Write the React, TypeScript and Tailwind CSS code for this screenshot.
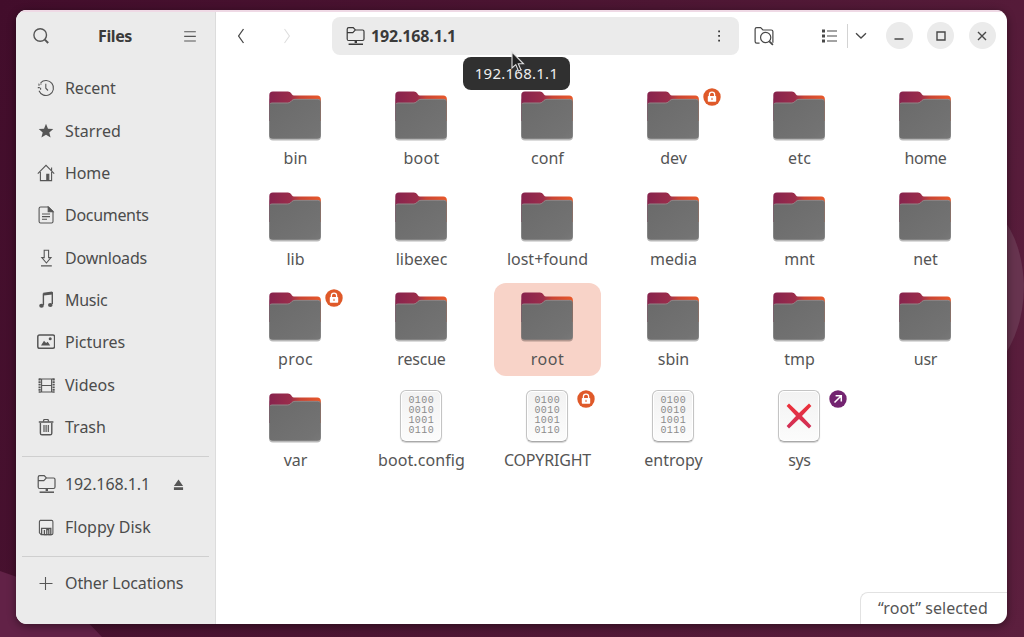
import type { ReactNode } from "react";

function Icon({ children, className = "size-[18px]" }: { children: ReactNode; className?: string }) {
  return (
    <svg viewBox="0 0 18 18" className={className + " shrink-0"} fill="none" stroke="currentColor" strokeWidth="1.1">
      {children}
    </svg>
  );
}

const NetworkFolder = () => (
  <svg viewBox="0 0 20 20" className="size-5 shrink-0" fill="none" stroke="currentColor" strokeWidth="1.2">
    <path d="M1.2 3.2Q1.2 1.6 2.8 1.6H7.2L9.4 4H16.6Q18 4 18 5.4V13Q18 14.5 16.5 14.5H2.7Q1.2 14.5 1.2 13ZM1.2 6.6H6.8L9.2 4.2" />
    <path d="M2.6 18.2H17" strokeWidth="1.5" />
    <path d="M8.6 16H11" strokeWidth="2" />
  </svg>
);

type Place = { name: string; track: string; icon: ReactNode };

const places: Place[] = [
  {
    name: "Recent",
    track: "tracking-[-0.1px]",
    icon: (
      <Icon>
        <path d="M3.6 3.8A7.5 7.5 0 1 1 2 11.8M8.8 4.8V9.2L11 11.5" />
        <path d="M0.8 8.6H3.6V11M2 6.8V5H4.6" strokeDasharray="2 1" />
      </Icon>
    ),
  },
  {
    name: "Starred",
    track: "tracking-[0.1px]",
    icon: (
      <Icon>
        <path d="M9 1.8L11 6.7L16.3 7L12.3 10.4L13.6 15.5L9 12.7L4.4 15.5L5.7 10.4L1.7 7L7 6.7Z" fill="currentColor" stroke="none" />
      </Icon>
    ),
  },
  {
    name: "Home",
    track: "tracking-[-0.1px]",
    icon: (
      <Icon>
        <path d="M0.8 9.6L9 1.4L17.2 9.6M3.4 8V16.6H14.6V8M14.6 3.5V6.5" />
        <path d="M9.8 16.5V10.4H11.8V16.5" fill="currentColor" />
      </Icon>
    ),
  },
  {
    name: "Documents",
    track: "tracking-[-0.3px]",
    icon: (
      <Icon>
        <path d="M3.6 1H11.4L16 5.6V15.5Q16 17 14.5 17H3.6Q2.1 17 2.1 15.5V2.5Q2.1 1 3.6 1ZM5 8H13M5 10.6H13M5 13.2H10" />
        <path d="M11.2 1V5.8H16Z" fill="currentColor" />
      </Icon>
    ),
  },
  {
    name: "Downloads",
    track: "tracking-[-0.2px]",
    icon: (
      <Icon>
        <path d="M7.2 1.2V8.6H4.8L9.4 14L14 8.6H11.6V1.2ZM4 16.9H14.8" />
      </Icon>
    ),
  },
  {
    name: "Music",
    track: "tracking-[-0.3px]",
    icon: (
      <Icon>
        <path d="M6.4 14V3L15.3 1.9V13" strokeWidth="1.4" />
        <path d="M6.4 3.2L15.3 2" strokeWidth="2.8" />
        <ellipse cx="4.5" cy="14.7" rx="2.3" ry="2" fill="currentColor" stroke="none" />
        <ellipse cx="13.3" cy="13.9" rx="2.3" ry="2" fill="currentColor" stroke="none" />
      </Icon>
    ),
  },
  {
    name: "Pictures",
    track: "tracking-[0px]",
    icon: (
      <Icon>
        <rect x="0.8" y="2" width="16.8" height="13.2" rx="1.8" strokeWidth="1.5" />
        <path d="M4 12.5L7 7.8L9.1 10L10.7 8.7L13.2 12.5Z" fill="currentColor" stroke="none" />
        <circle cx="13.2" cy="5.8" r="1.5" fill="currentColor" stroke="none" />
      </Icon>
    ),
  },
  {
    name: "Videos",
    track: "tracking-[0px]",
    icon: (
      <Icon>
        <path d="M2.6 2.6V16.4M16.6 2.6V16.4" strokeWidth="2.2" strokeDasharray="1.8 0.8" />
        <path d="M4.6 2.6V16.4M14.6 2.6V16.4M2 3H17.4M2 16H17.4M4.6 9.5H14.6" />
      </Icon>
    ),
  },
  {
    name: "Trash",
    track: "tracking-[0px]",
    icon: (
      <Icon>
        <path d="M3.4 5V15.2Q3.4 16.8 5 16.8H13.2Q14.8 16.8 14.8 15.2V5M1.8 4H16.4" strokeWidth="1.4" />
        <path d="M6.3 3.5L7 1.5H11L11.7 3.5M7 7V14M9.1 7V14M11.3 7V14" strokeWidth="1.2" />
      </Icon>
    ),
  },
];

type FileKind = "folder" | "binary" | "broken";
type Entry = { name: string; track?: string; kind?: FileKind; badge?: "lock" | "link"; selected?: boolean };

const entries: Entry[] = [
  { name: "bin" },
  { name: "boot", track: "tracking-[0.3px]" },
  { name: "conf" },
  { name: "dev" , badge: "lock" },
  { name: "etc", track: "tracking-[0.2px]" },
  { name: "home", track: "tracking-[-0.4px]" },
  { name: "lib" },
  { name: "libexec" },
  { name: "lost+found" },
  { name: "media" },
  { name: "mnt" },
  { name: "net" },
  { name: "proc", badge: "lock", track: "tracking-[0.4px]" },
  { name: "rescue", track: "tracking-[-0.2px]" },
  { name: "root", selected: true, track: "tracking-[0.5px]" },
  { name: "sbin" },
  { name: "tmp" },
  { name: "usr", track: "tracking-[-0.3px]" },
  { name: "var" },
  { name: "boot.config", kind: "binary", track: "tracking-[0.1px]" },
  { name: "COPYRIGHT", kind: "binary", badge: "lock", track: "tracking-[-0.2px]" },
  { name: "entropy", kind: "binary" },
  { name: "sys", kind: "broken", badge: "link", track: "tracking-[-0.4px]" },
];

function Folder() {
  return (
    <svg viewBox="0 0 54 52" className="mt-[9px] h-[52px] w-[54px]">
      <defs>
        <linearGradient id="back" x1="0" x2="1" y1="0" y2="0">
          <stop offset="0" stopColor="#87234d" />
          <stop offset="0.42" stopColor="#9b2d4b" />
          <stop offset="0.6" stopColor="#c94434" />
          <stop offset="1" stopColor="#e9592a" />
        </linearGradient>
        <linearGradient id="front" x1="0" x2="1" y1="0" y2="1">
          <stop offset="0" stopColor="#6a6a6a" />
          <stop offset="0.85" stopColor="#737373" />
          <stop offset="1" stopColor="#787878" />
        </linearGradient>
      </defs>
      <rect x="1" y="6" width="52" height="43.4" rx="4" fill="#000" opacity="0.28" />
      <path d="M1.3 4.2Q1.3 0.6 4.9 0.6H20Q22 0.6 23 2.1L24 3.6Q24.7 4.5 26 4.5H49.3Q52.8 4.5 52.8 8V30H1.3Z" fill="url(#back)" />
      <path d="M1.3 14.4Q1.3 11.8 4 11.8H19.5Q21.3 11.8 22.6 10.6L24 9.2Q25.3 8.1 27 8.1H49.6Q52.8 8.1 52.8 11.3V44.2Q52.8 47.8 49.2 47.8H4.9Q1.3 47.8 1.3 44.2Z" fill="url(#front)" />
      <path d="M2 12.8Q2.5 12 4 12H19.5Q21.3 12 22.6 10.8L24 9.4Q25.3 8.3 27 8.3H49.6Q51.5 8.3 52.3 9.6" fill="none" stroke="#a08f92" strokeWidth="0.7" />
    </svg>
  );
}

function Sheet({ children }: { children: ReactNode }) {
  return (
    <div className="mt-[6px] flex h-[52px] w-[42px] flex-col items-center justify-center rounded-[6px] border border-[#c4c4c4] border-b-[#a9a9a9] bg-gradient-to-b from-[#f2f2f2] to-[#fcfcfc] shadow-[0_1px_1px_rgba(0,0,0,0.18),inset_0_0_0_1px_#fff]">
      {children}
    </div>
  );
}

function Badge({ type }: { type: "lock" | "link" }) {
  return (
    <svg viewBox="0 0 18 18" className="absolute top-[6px] right-[6px] size-[18px]">
      <circle cx="9" cy="9" r="8.7" fill={type === "lock" ? "#df5929" : "#732470"} />
      {type === "lock" ? (
        <>
          <path d="M6.4 9V6.5Q6.4 4.2 9 4.2Q11.6 4.2 11.6 6.5V9" fill="none" stroke="#fff" strokeWidth="1.3" />
          <rect x="4.8" y="8" width="8.4" height="5.8" rx="0.7" fill="#fff" />
          <path d="M9 9.8V12" stroke="#df5929" strokeWidth="1" />
        </>
      ) : (
        <path d="M5.5 12.5L11.8 6.2M6.6 5.8H12.3V11.5" fill="none" stroke="#fff" strokeWidth="1.5" />
      )}
    </svg>
  );
}

function Tile({ entry }: { entry: Entry }) {
  return (
    <div
      className={
        "relative flex h-[93px] w-[107px] flex-col items-center rounded-[12px] " + (entry.selected ? "bg-[#f8d3c8]" : "")
      }
    >
      <div className="flex h-[65px] items-start pr-px">
        {entry.kind === "binary" ? (
          <Sheet>
            {["0100", "0010", "1001", "0110"].map((line) => (
              <span key={line} className="pl-[0.5px] font-['Liberation_Mono'] text-[10px] leading-[10px] tracking-[0.4px] text-[#8b8b8b]">
                {line}
              </span>
            ))}
          </Sheet>
        ) : entry.kind === "broken" ? (
          <Sheet>
            <svg viewBox="0 0 26 26" className="size-[26px]">
              <defs>
                <linearGradient id="cross" x1="0" x2="0" y1="0" y2="1">
                  <stop offset="0" stopColor="#ee3038" />
                  <stop offset="1" stopColor="#cf3059" />
                </linearGradient>
              </defs>
              <path d="M3 0.6L13 10L23 0.6L25.4 3L16 13L25.4 23L23 25.4L13 16L3 25.4L0.6 23L10 13L0.6 3Z" fill="url(#cross)" />
            </svg>
          </Sheet>
        ) : (
          <Folder />
        )}
      </div>
      <span className={"text-[16px] leading-[22px] whitespace-nowrap text-[#555] " + (entry.track ?? "")}>{entry.name}</span>
      {entry.badge && <Badge type={entry.badge} />}
    </div>
  );
}

function Row({ children, label, track = "" }: { children: ReactNode; label: string; track?: string }) {
  return (
    <div className="flex h-[42.35px] items-center pl-[21px]">
      <span className="flex w-[18px] shrink-0">{children}</span>
      <span className={"ml-[10px] text-[16px] leading-5 whitespace-nowrap text-[#4c4c4c] " + track}>{label}</span>
    </div>
  );
}

function Sidebar() {
  return (
    <aside className="flex w-[200px] shrink-0 flex-col border-r border-[#dcdcdc] bg-[#ebebeb] text-[#565656]">
      <header className="flex h-[51px] items-center justify-between pr-[18px] pl-4">
        <Icon>
          <circle cx="8.2" cy="8" r="6.3" strokeWidth="1.4" />
          <path d="M12.8 12.6L16.2 16" strokeWidth="2" />
        </Icon>
        <h1 className="pr-[3px] text-[16px] font-bold tracking-[-0.4px] text-[#3a3a3a]">Files</h1>
        <Icon className="size-[14px]">
          <path d="M1.5 3.5H16.5M1.5 9.5H16.5M1.5 15.5H16.5" strokeWidth="1.4" />
        </Icon>
      </header>
      <nav className="pt-[6px]">
        {places.map((place) => (
          <Row key={place.name} label={place.name} track={place.track}>
            {place.icon}
          </Row>
        ))}
      </nav>
      <hr className="mx-[6px] mt-[8px] mb-[6px] border-[#cfcfcf]" />
      <div className="flex items-center">
        <Row label="192.168.1.1" track="tracking-[-0.1px]">
          <NetworkFolder />
        </Row>
        <svg viewBox="0 0 12 12" className="ml-[23px] size-[11px]" fill="currentColor">
          <path d="M6 0.5L11 7.5H1ZM1 9H11V12H1Z" />
        </svg>
      </div>
      <Row label="Floppy Disk">
        <Icon>
          <path d="M3 2.4H14.6Q15.9 2.4 15.9 3.7V15.3Q15.9 16.6 14.6 16.6H4.2L2.4 14.8V3.7Q2.4 2.4 3.7 2.4" />
          <path d="M4.6 16.6V10.4H13.8V16.6H11.8V11.6H9.8V16.6H7.4V12" strokeWidth="1.3" />
        </Icon>
      </Row>
      <hr className="mx-[6px] mt-[8px] mb-[5px] border-[#cfcfcf]" />
      <Row label="Other Locations" track="tracking-[-0.1px]">
        <Icon>
          <path d="M2.5 9.5H15.5M8.5 3V16" />
        </Icon>
      </Row>
    </aside>
  );
}

function Toolbar() {
  return (
    <header className="flex h-[51px] shrink-0 items-center text-[#484848]">
      <Icon className="ml-[16px] size-[18px]">
        <path d="M11.5 2L6.6 9L11.5 16" strokeWidth="1.3" />
      </Icon>
      <Icon className="ml-[28px] size-[18px] text-[#dedede]">
        <path d="M6.5 2L11.4 9L6.5 16" />
      </Icon>
      <div className="mt-px ml-[36px] flex h-[38px] w-[407px] items-center rounded-[8px] bg-[#ebebeb] pr-[18px] pl-[14px] text-[#3a3a3a]">
        <NetworkFolder />
        <span className="ml-[5px] flex-1 text-[16px] leading-5 font-bold tracking-[-0.15px]">192.168.1.1</span>
        <svg viewBox="0 0 4 14" className="h-[14px] w-1" fill="currentColor">
          <path d="M1.2 1.4H3V3.2H1.2ZM1.2 6H3V7.8H1.2ZM1.2 10.8H3V12.6H1.2Z" />
        </svg>
      </div>
      <Icon className="ml-[15px] size-5">
        <path d="M5 15.5H2.5Q1 15.5 1 14V3Q1 1.5 2.5 1.5H6L8 3.6H15.5Q17 3.6 17 5V15" />
        <circle cx="10.5" cy="10.4" r="4.6" />
        <path d="M13.8 13.8L17 17" strokeWidth="1.6" />
      </Icon>
      <svg viewBox="0 0 16 14" className="ml-[47px] h-[14px] w-4" fill="none" stroke="currentColor">
        <path d="M1 2H4M1 7H4M1 12H4" strokeWidth="3" />
        <path d="M6 2H16M6 7H16M6 12H16" strokeWidth="1.2" />
      </svg>
      <span className="ml-[9.5px] h-6 w-px bg-[#d3d3d3]" />
      <svg viewBox="0 0 12 8" className="ml-[7px] h-2 w-3" fill="none" stroke="currentColor" strokeWidth="1.3">
        <path d="M1 1.2L6 6L11 1.2" />
      </svg>
      <div className="ml-[19px] flex gap-[14.5px]">
        {["M4.5 12H13.5", "M5 5H13V13H5Z", "M5 5L13 13M13 5L5 13"].map((d) => (
          <button key={d} className="grid size-[27px] place-items-center rounded-full bg-[#ebebeb]">
            <Icon>
              <path d={d} strokeWidth="1.4" />
            </Icon>
          </button>
        ))}
      </div>
    </header>
  );
}

export default function App() {
  return (
    <div className="relative h-[637px] w-[1024px] overflow-hidden bg-[linear-gradient(115deg,#420d2b_0%,#4d1633_50%,#5c1f3e_100%)] pt-[10px] pl-4 font-['Noto_Sans',sans-serif]">
      <svg className="absolute inset-0 size-full" viewBox="0 0 1024 637">
        <path d="M1000 215Q1022 240 1024 285Q1024 330 1000 362Z" fill="#67344f" />
        <path d="M0 571Q60 590 102 637H0Z" fill="#622247" />
      </svg>
      <div className="relative flex h-[614px] w-[991px] overflow-hidden rounded-[11px] bg-white shadow-[0_2px_8px_rgba(0,0,0,0.45)]">
        <Sidebar />
        <main className="flex flex-1 flex-col">
          <Toolbar />
          <div className="mt-[21px] ml-[26px] grid grid-cols-[repeat(6,107px)] gap-x-[19px] gap-y-[7.5px]">
            {entries.map((entry) => (
              <Tile key={entry.name} entry={entry} />
            ))}
          </div>
          <div className="mt-auto ml-auto flex h-[32px] w-[147px] items-center rounded-tl-[8px] border-t border-l border-[#e2e2e2] pb-px pl-[17px] text-[16px] tracking-[0.05px] whitespace-nowrap text-[#555]">
            “root” selected
          </div>
        </main>
        <span className="absolute inset-x-0 top-0 h-[1.5px] bg-[#efd9e5]" />
      </div>
      <div className="absolute top-[57px] left-[463px] flex h-[33px] w-[107px] items-center justify-center rounded-[8px] bg-[#303030] text-[15px] tracking-[0.25px] text-[#eee]">
        192.168.1.1
      </div>
      <svg viewBox="0 0 14 22" className="absolute top-[51px] left-[511px] h-[22px] w-[14px]">
        <path d="M1 1V17L4.8 13.6L7.5 20L10 19L7.3 12.8H12.5Z" fill="#222" stroke="#ddd" strokeWidth="1.1" />
      </svg>
    </div>
  );
}
